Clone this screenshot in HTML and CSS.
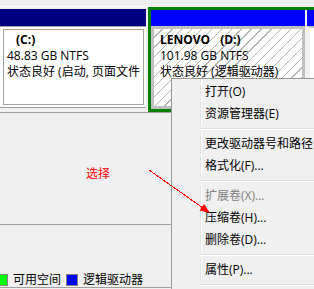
FILE: index.html
```html
<!DOCTYPE html>
<html lang="zh-CN">
<head>
    <meta charset="UTF-8">
    <meta name="viewport" content="width=device-width, initial-scale=1.0">
    <title>磁盘管理 - 压缩卷</title>
    <link rel="stylesheet" href="styles.css">
</head>
<body>
<div class="screen">

    <!-- 磁盘分区条 -->
    <div class="disks">
        <div class="part primary">
            <div class="bar navy"></div>
            <div class="body">
                <div class="frame">
                    <div class="name c-name">(C:)</div>
                    <div>48.83 GB NTFS</div>
                    <div class="status">状态良好 (启动, 页面文件</div>
                </div>
            </div>
        </div>

        <div class="extended">
            <div class="part logical selected">
                <div class="bar blue"></div>
                <div class="body hatch">
                    <div class="name">LENOVO<span class="letter">(D:)</span></div>
                    <div>101.98 GB NTFS</div>
                    <div class="status">状态良好 (逻辑驱动器)</div>
                </div>
            </div>
            <div class="part logical next">
                <div class="bar blue"></div>
                <div class="body"></div>
            </div>
        </div>
    </div>

    <!-- 下方窗格 -->
    <div class="lower">
        <div class="pane">
            <span class="note">选择</span>
        </div>
        <div class="legend">
            <span class="swatch free"></span><span class="label">可用空间</span>
            <span class="swatch logical-key"></span><span class="label">逻辑驱动器</span>
        </div>
    </div>

    <!-- 红色箭头标注 -->
    <svg class="arrow" width="314" height="289" viewBox="0 0 314 289">
        <line x1="149" y1="170" x2="203" y2="208" stroke="#ff0000" stroke-width="1" shape-rendering="crispEdges"/>
        <polygon points="210,213 199.5,210.5 204.1,203.9" fill="#ff0000"/>
    </svg>

    <!-- 右键菜单 -->
    <ul class="menu">
        <li>打开(O)</li>
        <li>资源管理器(E)</li>
        <li class="sep"></li>
        <li>更改驱动器号和路径</li>
        <li>格式化(F)...</li>
        <li class="sep"></li>
        <li class="off">扩展卷(X)...</li>
        <li>压缩卷(H)...</li>
        <li>删除卷(D)...</li>
        <li class="sep"></li>
        <li>属性(P)...</li>
        <li class="sep"></li>
    </ul>
</div>
</body>
</html>
```

FILE: styles.css
```css
*{
    box-sizing: border-box;
    margin:0;
    padding:0;
}
body{
    background:#f0f0f0;
    font-family:"Open Sans","Noto Sans CJK SC",sans-serif;
    font-size:12px;
    color:#000;
}
.screen{
    position:relative;
    width:314px;
    height:289px;
    overflow:hidden;
    background:#f0f0f0;
}

/* 分区条 */
.disks{
    display:flex;
    height:112px;
    padding-top:7px;
    background:linear-gradient(#f0f0f0 6px, #fff 6px, #fff 7px, #f0f0f0 7px);
}
.part{
    display:flex;
    flex-direction:column;
}
.bar{
    flex:none;
}
.navy{
    background:#000080;
    height:17px;
}
.blue{
    background:#0000ff;
    height:16px;
}
.primary{
    width:146px;
    margin:2px 0 4px;
}
.primary .body{
    flex:1;
    background:#fff;
    border-top:1px solid #a0a0a0;
    border-bottom:1px solid #a0a0a0;
    padding:2px 2px 2px 3px;
    display:flex;
}
.frame{
    flex:1;
    border:1px solid #a0a0a0;
    padding:2px 0 0 3px;
    line-height:16px;
    white-space:nowrap;
    overflow:hidden;
}
.name{
    font-weight:bold;
}
.c-name{
    padding-left:9px;
}
.letter{
    margin-left:10px;
}
.extended{
    flex:1;
    display:flex;
    margin-left:2px;
    border:3px solid #008000;
    border-right:0;
}
.selected{
    width:154px;
}
.hatch{
    flex:1;
    border:3px solid #c0c0c0;
    padding:3px 0 0 6px;
    line-height:16px;
    white-space:nowrap;
    overflow:hidden;
    background:
        repeating-linear-gradient(135deg, #fff 0, #fff 5.5px, #b4b4b4 5.5px, #b4b4b4 6.5px, #fff 6.5px, #fff 7px);
    background-color:#fff;
}
.next{
    flex:1;
    margin-left:2px;
}
.next .body{
    flex:1;
    background:#fff;
    border-left:3px solid #f0f0f0;
    border-top:2px solid #c0c0c0;
}

/* 下方窗格 */
.lower{
    border-top:1px solid #a0a0a0;
    height:177px;
    display:flex;
    flex-direction:column;
}
.pane{
    height:112px;
    border-top:3px solid #f0f0f0;
    border-bottom:1px solid #a0a0a0;
    padding:49px 0 0 86px;
}
.note{
    color:#ff0000;
    font-size:12px;
    line-height:16px;
}
.legend{
    margin-top:auto;
    margin-bottom:1px;
    height:15px;
    border-bottom:1px solid #a0a0a0;
    display:flex;
    align-items:center;
}
.swatch{
    width:12px;
    height:12px;
    border:1px solid #808080;
    flex:none;
}
.free{
    background:#00ff00;
    margin-left:-4px;
}
.logical-key{
    background:#0000ff;
    margin-left:5px;
}
.label{
    margin-left:5px;
    line-height:16px;
}

.arrow{
    position:absolute;
    left:0;
    top:0;
    z-index:2;
}

/* 右键菜单 */
.menu{
    position:absolute;
    left:171px;
    top:78px;
    width:180px;
    padding:2px;
    list-style:none;
    border:1px solid #979797;
    background:
        linear-gradient(to right, transparent 28px, #e2e3e3 28px, #e2e3e3 29px, #fff 29px, #fff 30px, transparent 30px),
        #f0f0f0;
    white-space:nowrap;
}
.menu li{
    height:22px;
    line-height:22px;
    padding-left:31px;
}
.menu li.off{
    color:#808080;
}
.menu li.sep{
    height:8px;
    margin-left:26px;
    padding:0;
    background:linear-gradient(#f0f0f0 3px, #e0e0e0 3px, #e0e0e0 4px, #fff 4px, #fff 5px, #f0f0f0 5px);
}
```
